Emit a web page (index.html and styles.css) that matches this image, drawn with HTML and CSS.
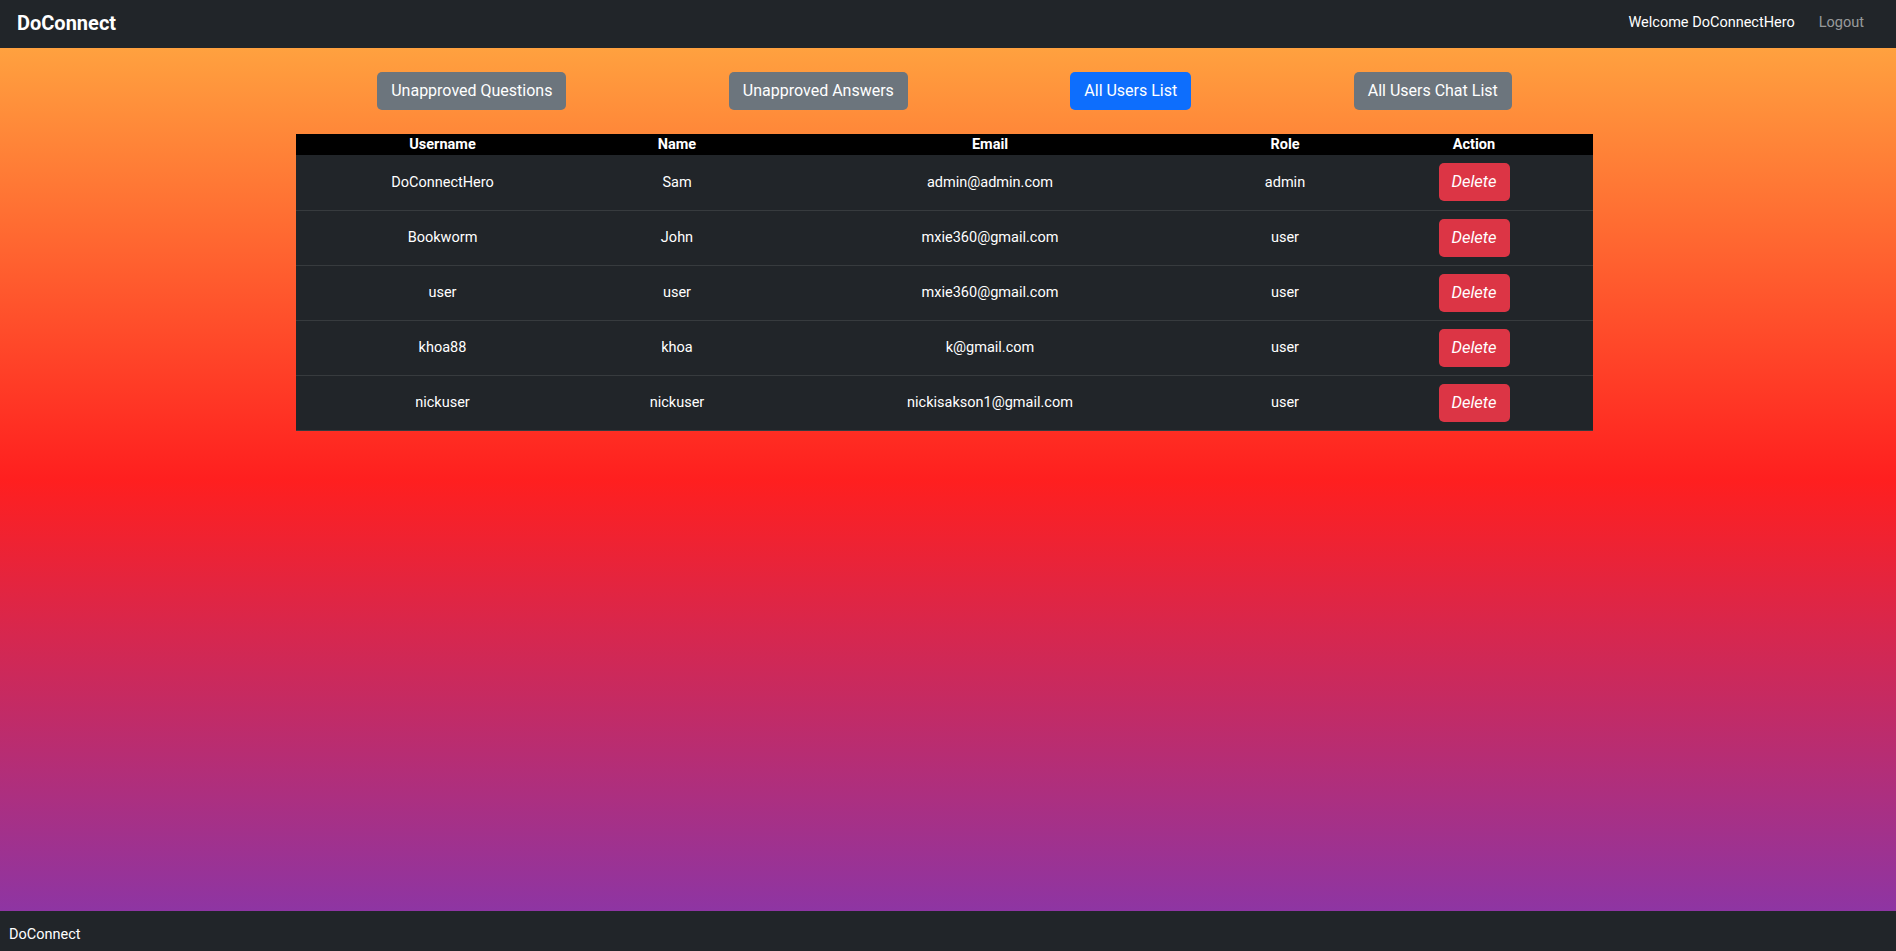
FILE: index.html
```html
<!DOCTYPE html>
<html lang="en">
<head>
<meta charset="utf-8">
<title>DoConnect</title>
<link rel="stylesheet" href="styles.css">
</head>
<body>
<nav class="navbar">
  <a class="brand" href="#">DoConnect</a>
  <div class="nav-right">
    <span class="welcome">Welcome DoConnectHero</span>
    <a class="logout" href="#">Logout</a>
  </div>
</nav>
<main class="main">
  <div class="container">
    <div class="btn-row">
      <button class="btn btn-gray">Unapproved Questions</button>
      <button class="btn btn-gray">Unapproved Answers</button>
      <button class="btn btn-blue">All Users List</button>
      <button class="btn btn-gray">All Users Chat List</button>
    </div>
    <table class="users">
      <colgroup>
        <col class="c-user"><col class="c-name"><col class="c-email"><col class="c-role"><col class="c-action">
      </colgroup>
      <thead>
        <tr><th>Username</th><th>Name</th><th>Email</th><th>Role</th><th>Action</th></tr>
      </thead>
      <tbody>
        <tr><td>DoConnectHero</td><td>Sam</td><td>admin@admin.com</td><td>admin</td><td><button class="btn btn-red">Delete</button></td></tr>
        <tr><td>Bookworm</td><td>John</td><td>mxie360@gmail.com</td><td>user</td><td><button class="btn btn-red">Delete</button></td></tr>
        <tr><td>user</td><td>user</td><td>mxie360@gmail.com</td><td>user</td><td><button class="btn btn-red">Delete</button></td></tr>
        <tr><td>khoa88</td><td>khoa</td><td>k@gmail.com</td><td>user</td><td><button class="btn btn-red">Delete</button></td></tr>
        <tr><td>nickuser</td><td>nickuser</td><td>nickisakson1@gmail.com</td><td>user</td><td><button class="btn btn-red">Delete</button></td></tr>
      </tbody>
    </table>
  </div>
</main>
<footer class="footer">DoConnect</footer>
</body>
</html>
```
FILE: styles.css
```css
* { box-sizing: border-box; }
html, body { margin: 0; padding: 0; }
body {
  font-family: Roboto, "Liberation Sans", sans-serif;
  height: 100vh;
  overflow: hidden;
  display: flex;
  flex-direction: column;
  color: #fff;
}
.navbar {
  height: 48px;
  background: #212529;
  display: flex;
  align-items: center;
  justify-content: space-between;
  padding: 0 32px 3px 17px;
  flex: none;
}
.brand {
  color: #fff;
  font-size: 20px;
  font-weight: 700;
  text-decoration: none;
}
.nav-right {
  display: flex;
  align-items: center;
  gap: 24px;
  font-size: 14.5px;
}
.welcome { color: #fff; }
.logout { color: rgba(255,255,255,.55); text-decoration: none; }
.main {
  flex: 1;
  background: linear-gradient(180deg, #ffa13f 0%, #ff1f1f 50%, #8e35a3 100%);
}
.container {
  width: 1297px;
  margin: 0 0 0 296px;
}
.btn-row {
  display: flex;
  justify-content: space-around;
  align-items: flex-start;
  padding-top: 24px;
  height: 86px;
}
.btn {
  font-family: Roboto, "Liberation Sans", sans-serif;
  font-size: 16px;
  line-height: 24px;
  height: 38px;
  padding: 6px 13px;
  border: 1px solid transparent;
  border-radius: 5px;
  color: #fff;
  white-space: nowrap;
  cursor: pointer;
}
.btn-gray { background: #6c757d; }
.btn-blue { background: #0d6efd; }
.btn-red { background: #dc3545; font-style: italic; }
.users {
  width: 1297px;
  border-collapse: collapse;
  background: #212529;
  table-layout: fixed;
}
.c-user { width: 293px; }
.c-name { width: 176px; }
.c-email { width: 450px; }
.c-role { width: 140px; }
.c-action { width: 238px; }
.users th {
  background: #000;
  color: #fff;
  font-weight: 700;
  font-size: 14.5px;
  height: 21px;
  line-height: 20px;
  padding: 0;
}
.users td {
  text-align: center;
  font-size: 14.5px;
  padding: 8px;
  height: 55px;
  border-bottom: 1px solid #373b3e;
  color: #fff;
}
.users td .btn { width: 71px; padding: 6px 0; font-size: 16.5px; }
.footer {
  height: 40px;
  background: #212529;
  color: #fff;
  font-size: 14.5px;
  display: flex;
  align-items: center;
  padding: 6px 0 0 9px;
  flex: none;
}
```
